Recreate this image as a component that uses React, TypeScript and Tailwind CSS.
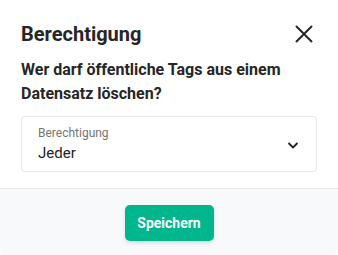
export default function App() {
  return (
    <div className="flex h-[255px] w-[338px] flex-col overflow-hidden rounded-md bg-white font-['Roboto',sans-serif] text-[#262626]">
      <div className="flex flex-col px-[21px] pt-[21px]">
        <div className="flex items-center justify-between">
          <h2 className="text-[20px] font-bold leading-[26px]">Berechtigung</h2>
          <svg width="24" height="24" viewBox="0 0 24 24" className="mr-[1px] text-[#262626]">
            <path d="M4.5 4.5l15 15M19.5 4.5l-15 15" stroke="currentColor" strokeWidth="2" strokeLinecap="round" fill="none" />
          </svg>
        </div>
        <p className="mt-[11px] text-[16px] font-bold leading-[24px]">
          Wer darf öffentliche Tags aus einem Datensatz löschen?
        </p>
        <div className="mt-[10px] flex h-[56px] items-center justify-between rounded border border-[#e5e7eb] pl-[16px] pr-[16px]">
          <div className="flex flex-col">
            <span className="text-[12px] leading-[15px] text-[#757575]">Berechtigung</span>
            <span className="mt-[2px] text-[15px] leading-[20px] text-[#222]">Jeder</span>
          </div>
          <svg width="14" height="14" viewBox="0 0 14 14" className="mt-[1px]">
            <path d="M2.5 5l4.5 4.5L11.5 5" stroke="#222" strokeWidth="1.8" fill="none" />
          </svg>
        </div>
      </div>
      <div className="mt-[16px] flex flex-1 items-start justify-center border-t border-[#e6e8eb] bg-[#f8f9fb] pt-[16px]">
        <button className="h-[36px] w-[89px] rounded-[5px] bg-[#00b68c] text-[14px] font-bold text-white shadow-[0_2px_4px_rgba(0,0,0,0.12)]">
          Speichern
        </button>
      </div>
    </div>
  );
}
